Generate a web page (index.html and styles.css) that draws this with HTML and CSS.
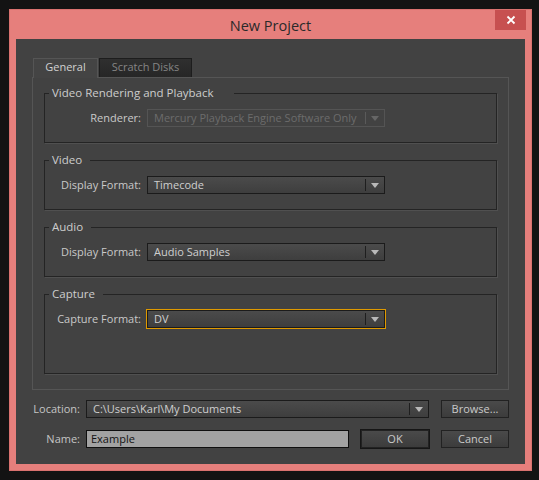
FILE: index.html
```html
<!DOCTYPE html>
<html>
<head>
<meta charset="utf-8">
<title>New Project</title>
<link rel="stylesheet" href="styles.css">
</head>
<body>
<div class="window">
  <div class="titlebar">
    <span></span>
    <div class="title">New Project</div>
    <button class="close" aria-label="Close">
      <svg width="10" height="10" viewBox="0 0 10 10"><path d="M1.5 1.5L8.5 8.5M8.5 1.5L1.5 8.5" stroke="#fff" stroke-width="1.8" fill="none"/></svg>
    </button>
  </div>
  <div class="client">
    <div class="tabs">
      <div class="tab active">General</div>
      <div class="tab">Scratch Disks</div>
    </div>
    <div class="tabpanel">
      <fieldset class="group">
        <legend class="wide">Video Rendering and Playback</legend>
        <div class="row">
          <label>Renderer:</label>
          <div class="select disabled"><span class="value">Mercury Playback Engine Software Only</span><span class="btn"><i class="arrow"></i></span></div>
        </div>
      </fieldset>
      <fieldset class="group">
        <legend>Video</legend>
        <div class="row">
          <label>Display Format:</label>
          <div class="select"><span class="value">Timecode</span><span class="btn"><i class="arrow"></i></span></div>
        </div>
      </fieldset>
      <fieldset class="group">
        <legend>Audio</legend>
        <div class="row">
          <label>Display Format:</label>
          <div class="select"><span class="value">Audio Samples</span><span class="btn"><i class="arrow"></i></span></div>
        </div>
      </fieldset>
      <fieldset class="group tall">
        <legend>Capture</legend>
        <div class="row">
          <label>Capture Format:</label>
          <div class="select focused"><span class="value">DV</span><span class="btn"><i class="arrow"></i></span></div>
        </div>
      </fieldset>
    </div>
    <div class="footer">
      <div class="frow">
        <label>Location:</label>
        <div class="select loc"><span class="value">C:\Users\Karl\My Documents</span><span class="btn"><i class="arrow"></i></span></div>
        <button class="pbtn">Browse...</button>
      </div>
      <div class="frow">
        <label>Name:</label>
        <div class="input">Example</div>
        <button class="pbtn default">OK</button>
        <button class="pbtn">Cancel</button>
      </div>
    </div>
  </div>
</div>
</body>
</html>
```
FILE: styles.css
```css
* { box-sizing: border-box; }
html, body { margin: 0; padding: 0; }
body {
  background: #131313;
  font-family: "Open Sans", "Noto Sans", "Liberation Sans", sans-serif;
  font-size: 11px;
  color: #c9c9c9;
  width: 539px;
  height: 480px;
  overflow: hidden;
}
.window {
  margin: 9px 0 0 9px;
  width: 523px;
  height: 462px;
  background: #e67f7c;
  border: 1px solid #d9726f;
  padding: 0 6px 6px;
  display: flex;
  flex-direction: column;
}
.titlebar {
  height: 29px;
  display: grid;
  grid-template-columns: 1fr auto 1fr;
  align-items: start;
}
.title {
  align-self: center;
  font-size: 14.5px;
  color: #2a2a2a;
  padding-top: 1px;
}
.close {
  justify-self: end;
  width: 31px;
  height: 20px;
  margin-right: -1px;
  border: none;
  padding: 0;
  background: #c75050;
  display: flex;
  align-items: center;
  justify-content: center;
}
.client {
  flex: 1;
  background: #424242;
  padding: 19px 16px 0 16px;
  display: flex;
  flex-direction: column;
}
.tabs {
  display: flex;
  align-items: flex-end;
  gap: 1px;
  margin-left: 1px;
  height: 19px;
}
.tab {
  height: 19px;
  padding: 0 10px 3px;
  display: flex;
  align-items: center;
  justify-content: center;
  border: 1px solid #1d1d1d;
  border-bottom: none;
  background: linear-gradient(#2f2f2f, #262626);
  color: #858585;
  width: 93px;
}
.tab.active {
  width: 65px;
  height: 20px;
  padding-bottom: 4px;
  margin-bottom: -1px;
  position: relative;
  z-index: 1;
  background: #444444;
  border-color: #555555;
  color: #d2d2d2;
}
.tabpanel {
  height: 313px;
  border: 1px solid #555555;
  padding: 7px 11px 0 11px;
}
.group {
  margin: 0 0 9px 0;
  padding: 8px 0 15px 0;
  border: 1px solid #242424;
  box-shadow: 1px 1px 0 #505050;
  min-width: 0;
}
.group.tall { padding-bottom: 45px; margin-bottom: 0; }
.group legend {
  margin-left: 4px;
  padding: 0 8px 0 3px;
  line-height: 16px;
  height: 16px;
  font-size: 11.5px;
  color: #cdcdcd;
}
.group legend.wide { padding-right: 20px; }
.row {
  display: flex;
  align-items: center;
  gap: 6px;
}
.row label {
  width: 96px;
  text-align: right;
  padding-bottom: 1px;
}
.select {
  height: 18px;
  width: 238px;
  display: flex;
  align-items: stretch;
  border: 1px solid #1b1b1b;
  background: linear-gradient(#4b4b4b, #3e3e3e);
  color: #cfcfcf;
}
.select .value {
  flex: 1;
  padding-left: 6px;
  padding-bottom: 1px;
  display: flex;
  align-items: center;
  white-space: nowrap;
  overflow: hidden;
}
.select .btn {
  width: 18px;
  display: flex;
  align-items: center;
  justify-content: center;
  position: relative;
}
.select .btn::before {
  content: "";
  position: absolute;
  left: -1px;
  top: 2px;
  bottom: 2px;
  width: 1px;
  background: #1e1e1e;
}
.arrow {
  width: 0;
  height: 0;
  border-left: 4px solid transparent;
  border-right: 4px solid transparent;
  border-top: 5px solid #b9b9b9;
  margin-top: 1px;
}
.select.disabled {
  background: #424242;
  border-color: #545454;
  color: #6c6c6c;
}
.select.disabled .btn::before { background: #5a5a5a; }
.select.disabled .arrow { border-top-color: #666666; }
.select.focused {
  outline: 1px solid #e09a00;
}
.footer {
  margin-top: 10px;
  display: flex;
  flex-direction: column;
  gap: 12px;
}
.frow {
  display: flex;
  align-items: center;
  gap: 12px;
  height: 18px;
}
.frow label {
  width: 48px;
  text-align: right;
  margin-right: -6px;
  padding-bottom: 1px;
  color: #c5c5c5;
}
.select.loc { width: 343px; }
.input {
  width: 263px;
  height: 18px;
  background: #a2a2a2;
  border: 1px solid #0f0f0f;
  color: #141414;
  padding-left: 4px;
  padding-bottom: 1px;
  display: flex;
  align-items: center;
}
.pbtn {
  width: 68px;
  height: 18px;
  padding: 0 0 1px;
  border: 1px solid #222222;
  background: linear-gradient(#4a4a4a, #3c3c3c);
  color: #cacaca;
  font: inherit;
  display: flex;
  align-items: center;
  justify-content: center;
}
.pbtn.default {
  outline: 1px solid #161616;
}
```
